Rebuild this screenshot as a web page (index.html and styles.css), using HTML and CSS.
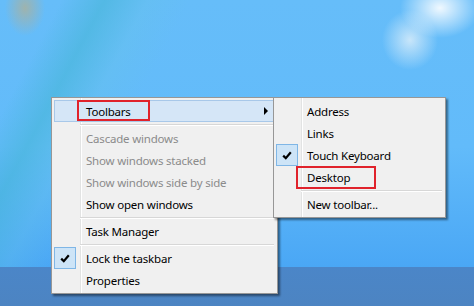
FILE: index.html
```html
<!DOCTYPE html>
<html lang="en">
<head>
  <meta charset="UTF-8">
  <title>Taskbar context menu</title>
  <link rel="stylesheet" href="styles.css">
</head>
<body>
  <div class="desktop">
    <div class="menu main-menu">
      <div class="item active">
        <span class="label">Toolbars</span>
        <span class="arrow"></span>
      </div>
      <div class="sep"></div>
      <div class="item disabled"><span class="label">Cascade windows</span></div>
      <div class="item disabled"><span class="label">Show windows stacked</span></div>
      <div class="item disabled"><span class="label">Show windows side by side</span></div>
      <div class="item"><span class="label">Show open windows</span></div>
      <div class="sep"></div>
      <div class="item"><span class="label">Task Manager</span></div>
      <div class="sep"></div>
      <div class="item checked">
        <span class="check">
          <svg width="10" height="9" viewBox="0 0 10 9"><polyline points="1.2,4.6 3.8,7.2 8.8,1.2" fill="none" stroke="#000" stroke-width="2.2"/></svg>
        </span>
        <span class="label">Lock the taskbar</span>
      </div>
      <div class="item"><span class="label">Properties</span></div>
    </div>

    <div class="menu sub-menu">
      <div class="item"><span class="label">Address</span></div>
      <div class="item"><span class="label">Links</span></div>
      <div class="item checked">
        <span class="check">
          <svg width="10" height="9" viewBox="0 0 10 9"><polyline points="1.2,4.6 3.8,7.2 8.8,1.2" fill="none" stroke="#000" stroke-width="2.2"/></svg>
        </span>
        <span class="label">Touch Keyboard</span>
      </div>
      <div class="item"><span class="label">Desktop</span></div>
      <div class="sep"></div>
      <div class="item"><span class="label">New toolbar...</span></div>
    </div>

    <!-- red annotation boxes -->
    <div class="mark mark-toolbars"></div>
    <div class="mark mark-desktop"></div>
  </div>
  <div class="taskbar"></div>
</body>
</html>
```

FILE: styles.css
```css
body {
  margin: 0;
  width: 474px;
  height: 306px;
  overflow: hidden;
  font-family: "Noto Sans", "Open Sans", sans-serif;
  font-size: 11.5px;
  letter-spacing: -0.2px;
  color: #000;
}

.desktop {
  position: relative;
  height: 267px;
  background:
    radial-gradient(ellipse 20px 28px at 25px 8px, rgba(165, 178, 165, 0.9), rgba(165, 178, 165, 0) 100%),
    radial-gradient(ellipse 40px 30px at 440px 8px, rgba(255, 255, 255, 0.9), rgba(255, 255, 255, 0) 100%),
    radial-gradient(ellipse 28px 30px at 410px 40px, rgba(225, 240, 250, 0.8), rgba(225, 240, 250, 0) 100%),
    linear-gradient(118deg, rgba(80, 190, 230, 0) 10%, rgba(70, 182, 215, 0.6) 17%, rgba(100, 195, 230, 0.3) 24%, rgba(110, 200, 235, 0) 31%),
    linear-gradient(180deg, #66bdf9 0%, #62bbfa 55%, #4aa7f5 100%);
}

.taskbar {
  height: 39px;
  background: linear-gradient(180deg, #4b86c8, #4c84c2);
}

.menu {
  position: absolute;
  box-sizing: border-box;
  background-color: #f0f0f0;
  border: 1px solid #979797;
  padding: 2px 3px 2px 2px;
  box-shadow: 2px 2px 2px rgba(0, 0, 0, 0.45);
}

.main-menu {
  left: 51px;
  top: 97px;
  width: 227px;
  background-image: linear-gradient(90deg, transparent 28px, #e2e3e3 28px, #e2e3e3 29px, #fff 29px, #fff 30px, transparent 30px);
}

.sub-menu {
  left: 273px;
  top: 97px;
  width: 173px;
  background-image: linear-gradient(90deg, transparent 27px, #e2e3e3 27px, #e2e3e3 28px, #fff 28px, #fff 29px, transparent 29px);
}

.item {
  position: relative;
  display: flex;
  align-items: center;
  height: 22px;
  box-sizing: border-box;
  padding-left: 32px;
  white-space: nowrap;
}

.sub-menu .item {
  padding-left: 31px;
}

.item.active {
  background-color: #d5e6f7;
  border: 1px solid #a8c8e9;
  padding-left: 31px;
}

.item.disabled {
  color: #8b8b8b;
}

.arrow {
  margin-left: auto;
  margin-right: 5px;
  width: 0;
  height: 0;
  border-left: 4px solid #000;
  border-top: 4px solid transparent;
  border-bottom: 4px solid transparent;
}

.check {
  position: absolute;
  left: 0;
  top: 0;
  box-sizing: border-box;
  width: 22px;
  height: 22px;
  display: flex;
  align-items: center;
  justify-content: center;
  background-color: #cde4f7;
  border: 1px solid #7fb6e6;
}

.sep {
  height: 0;
  margin: 2px 0 1px 26px;
  border-top: 1px solid #d7d7d7;
  border-bottom: 1px solid #fff;
}

.sub-menu .sep {
  margin-left: 25px;
}

.mark {
  position: absolute;
  box-sizing: border-box;
  border: 2px solid #e0222b;
}

.mark-toolbars {
  left: 77px;
  top: 100px;
  width: 73px;
  height: 21px;
}

.mark-desktop {
  left: 296px;
  top: 166px;
  width: 80px;
  height: 23px;
}
```
